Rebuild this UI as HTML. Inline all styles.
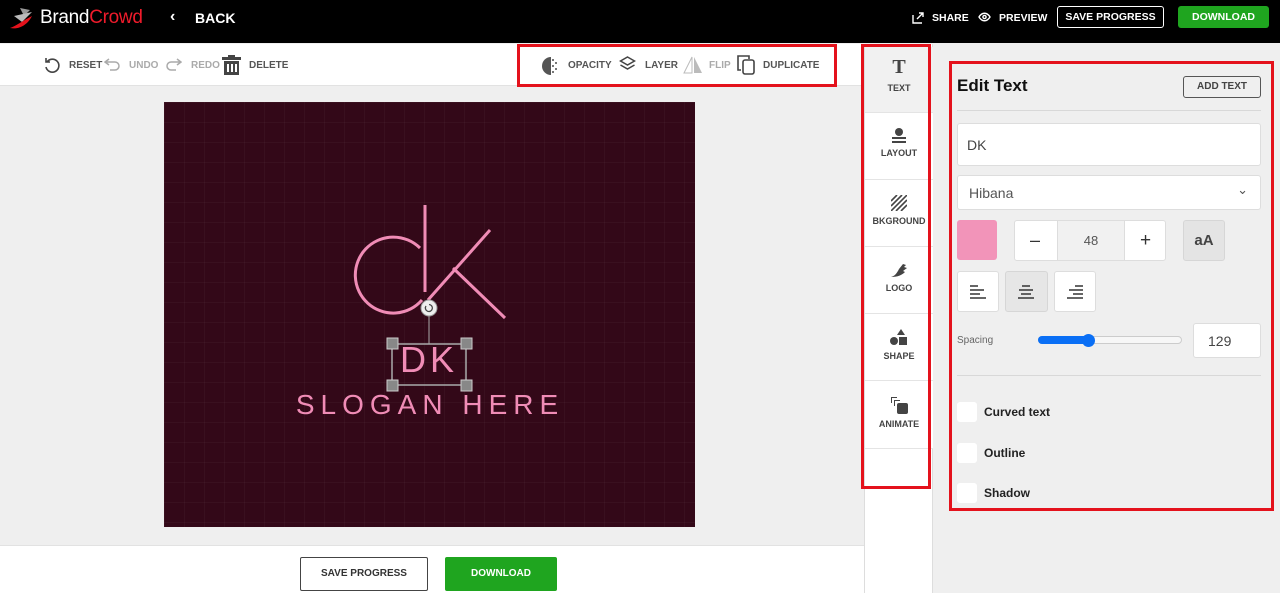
<!DOCTYPE html>
<html><head><meta charset="utf-8"><style>
*{box-sizing:border-box;margin:0;padding:0}
body{width:1280px;height:593px;overflow:hidden;font-family:"Liberation Sans",sans-serif;background:#efefef;position:relative}
.a{position:absolute}
.hd{left:0;top:0;width:1280px;height:43px;background:#000;color:#fff}
.b{font-weight:bold;font-size:11px}
.red{border:3px solid #e4121c}
.tb{color:#555;font-size:10px;font-weight:bold}
.nav{left:865px;width:68px;text-align:center;font-size:9px;font-weight:bold;color:#444;background:#fff;border-bottom:1px solid #e4e4e4}
.box{background:#fff;border:1px solid #ddd;border-radius:3px}
.cb{width:20px;height:20px;background:#fff;border-radius:3px}
.lbl{font-size:12px;font-weight:bold;color:#222}
</style></head><body>
<div class="a hd">
 <svg class="a" style="left:8px;top:6px" width="30" height="26" viewBox="0 0 30 26"><path d="M12 2l10 2-6 6z" fill="#999"/><path d="M6 10l18-4-10 10z" fill="#bbb"/><path d="M2 22c6-2 14-8 22-12-4 8-12 14-22 12z" fill="#e4121c"/></svg>
 <div class="a" style="left:40px;top:7px;font-size:19px;letter-spacing:-0.3px"><span style="color:#fff">Brand</span><span style="color:#ef1b2b">Crowd</span></div>
 <div class="a" style="left:170px;top:8px;font-size:16px;font-weight:bold">‹</div>
 <div class="a" style="left:195px;top:10px;font-size:14px;font-weight:bold">BACK</div>
 <svg class="a" style="left:912px;top:12px" width="12" height="12" viewBox="0 0 12 12" fill="none" stroke="#fff" stroke-width="1.4"><path d="M1 3v8h9M5 7l6-6M7 1h4v4"/></svg>
 <div class="a b" style="left:932px;top:12px;font-size:10.5px">SHARE</div>
 <svg class="a" style="left:978px;top:12px" width="13" height="10" viewBox="0 0 13 10" fill="none" stroke="#fff" stroke-width="1.4"><path d="M1 5c3-5 8-5 11 0-3 5-8 5-11 0z"/><circle cx="6.5" cy="5" r="1.6"/></svg>
 <div class="a b" style="left:999px;top:12px;font-size:10.5px">PREVIEW</div>
 <div class="a b" style="left:1057px;top:6px;width:107px;height:22px;border:1px solid #fff;border-radius:3px;text-align:center;line-height:20px;font-size:10.5px">SAVE PROGRESS</div>
 <div class="a b" style="left:1178px;top:6px;width:91px;height:22px;background:#1fa51f;border-radius:3px;text-align:center;line-height:22px;font-size:10.5px">DOWNLOAD</div>
</div>
<div class="a" style="left:0;top:44px;width:864px;height:42px;background:#fff;border-bottom:1px solid #e2e2e2"></div>
<svg class="a" style="left:44px;top:57px" width="17" height="17" viewBox="0 0 17 17" fill="none" stroke="#444" stroke-width="1.6"><path d="M3 5a6.5 6.5 0 1 1-1 5M2 1v4h4"/></svg>
<div class="a tb" style="left:69px;top:60px">RESET</div>
<svg class="a" style="left:104px;top:57px" width="18" height="15" viewBox="0 0 18 15" fill="none" stroke="#aaa" stroke-width="1.5"><path d="M5 2L1 5l4 3M1 5h10a4 4 0 0 1 0 8H6"/></svg>
<div class="a tb" style="left:129px;top:60px;color:#aaa">UNDO</div>
<svg class="a" style="left:164px;top:57px" width="18" height="15" viewBox="0 0 18 15" fill="none" stroke="#aaa" stroke-width="1.5"><path d="M13 2l4 3-4 3M17 5H7a4 4 0 0 0 0 8h5"/></svg>
<div class="a tb" style="left:191px;top:60px;color:#aaa">REDO</div>
<svg class="a" style="left:222px;top:55px" width="19" height="20" viewBox="0 0 19 20" fill="#444"><rect x="0" y="2" width="19" height="3"/><rect x="6" y="0" width="7" height="3"/><path d="M2 6h15v14H2zM5 9v8h2V9zm4 0v8h2V9zm4 0v8h2V9z" fill-rule="evenodd"/></svg>
<div class="a tb" style="left:249px;top:60px">DELETE</div>
<div class="a red" style="left:517px;top:44px;width:320px;height:43px"></div>
<svg class="a" style="left:542px;top:57px" width="18" height="18" viewBox="0 0 18 18"><path d="M9 0a9 9 0 0 0 0 18z" fill="#555"/><g fill="#777"><rect x="10" y="2" width="2" height="2"/><rect x="13" y="5" width="2" height="2"/><rect x="10" y="8" width="2" height="2"/><rect x="13" y="11" width="2" height="2"/><rect x="10" y="14" width="2" height="2"/></g></svg>
<div class="a tb" style="left:568px;top:60px">OPACITY</div>
<svg class="a" style="left:619px;top:56px" width="17" height="17" viewBox="0 0 17 17" fill="none" stroke="#444" stroke-width="1.5"><path d="M8.5 1l7 4-7 4-7-4zM1.5 9l7 4 7-4"/></svg>
<div class="a tb" style="left:645px;top:60px">LAYER</div>
<svg class="a" style="left:683px;top:56px" width="20" height="18" viewBox="0 0 20 18"><path d="M9 1v16H1z" fill="none" stroke="#bbb"/><path d="M11 1v16h8z" fill="#bbb"/></svg>
<div class="a tb" style="left:709px;top:60px;color:#aaa">FLIP</div>
<svg class="a" style="left:737px;top:55px" width="19" height="20" viewBox="0 0 19 20" fill="none" stroke="#444" stroke-width="1.6"><path d="M4 15H1V1h11v3"/><rect x="6" y="5" width="11" height="14" rx="2"/></svg>
<div class="a tb" style="left:763px;top:60px">DUPLICATE</div>
<div class="a" style="left:164px;top:102px;width:531px;height:425px;background:#330818;background-image:linear-gradient(rgba(255,255,255,.03) 1px,transparent 1px),linear-gradient(90deg,rgba(255,255,255,.03) 1px,transparent 1px);background-size:20px 20px"></div>
<svg class="a" style="left:300px;top:190px" width="230" height="150" viewBox="0 0 230 150" fill="none" stroke="#f08cb6" stroke-width="3"><path d="M120 58A38 38 0 1 0 122 110"/><path d="M125 15V102M190 40L128 110M153 78L205 128"/></svg>
<div class="a" style="left:389px;top:338px;width:80px;text-align:center;color:#f08cb6;font-size:36px;letter-spacing:4px;line-height:44px">DK</div>
<svg class="a" style="left:380px;top:295px" width="100" height="100" viewBox="0 0 100 100"><line x1="49" y1="18" x2="49" y2="49" stroke="#aaa"/><rect x="12" y="49" width="74" height="41" fill="none" stroke="#aaa" stroke-width="1.5"/><circle cx="49" cy="13" r="8" fill="#eee" stroke="#999"/><path d="M46 11a3.5 3.5 0 1 0 3-1.5" fill="none" stroke="#444" stroke-width="1.3"/><g fill="#888" stroke="#ccc"><rect x="7" y="43" width="11" height="11"/><rect x="81" y="43" width="11" height="11"/><rect x="7" y="85" width="11" height="11"/><rect x="81" y="85" width="11" height="11"/></g></svg>
<div class="a" style="left:290px;top:389px;width:280px;text-align:center;color:#f08cb6;font-size:28px;letter-spacing:6px;line-height:32px">SLOGAN HERE</div>
<div class="a" style="left:0;top:545px;width:864px;height:48px;background:#fff;border-top:1px solid #e2e2e2"></div>
<div class="a b" style="left:300px;top:557px;width:128px;height:34px;border:1px solid #444;border-radius:2px;text-align:center;line-height:32px;color:#333;font-size:10px">SAVE PROGRESS</div>
<div class="a b" style="left:445px;top:557px;width:112px;height:34px;background:#1fa51f;border-radius:2px;text-align:center;line-height:34px;color:#fff;font-size:10px">DOWNLOAD</div>
<div class="a" style="left:864px;top:44px;width:1px;height:549px;background:#ddd"></div>
<div class="a" style="left:865px;top:44px;width:68px;height:549px;background:#fff;border-right:1px solid #ddd"></div>
<div class="a nav" style="top:47px;height:66px;background:#f1f1f1"><div style="font-size:20px;font-family:'Liberation Serif',serif;color:#444;margin-top:9px;line-height:22px">T</div><div style="margin-top:5px">TEXT</div></div>
<div class="a nav" style="top:113px;height:67px"><svg style="margin-top:14px" width="16" height="16" viewBox="0 0 16 16" fill="#444"><circle cx="8" cy="5" r="4"/><rect x="1" y="10" width="14" height="2"/><rect x="1" y="14" width="14" height="2"/></svg><div style="margin-top:3px">LAYOUT</div></div>
<div class="a nav" style="top:180px;height:67px"><svg style="margin-top:15px" width="16" height="16" viewBox="0 0 16 16" stroke="#444" stroke-width="1.6"><path d="M0 6l6-6M0 11l11-11M0 16l16-16M5 16l11-11M10 16l6-6"/></svg><div style="margin-top:3px">BKGROUND</div></div>
<div class="a nav" style="top:247px;height:67px"><svg style="margin-top:15px" width="18" height="16" viewBox="0 0 18 16" fill="#444"><path d="M1 15c4-1 6-4 8-8l4-5 3 1-2 2 3 1-4 3 2 1c-3 3-7 5-14 5z"/></svg><div style="margin-top:3px">LOGO</div></div>
<div class="a nav" style="top:314px;height:67px"><svg style="margin-top:15px" width="18" height="17" viewBox="0 0 18 17" fill="#444"><path d="M11 0l4 6h-8z"/><circle cx="4" cy="12" r="4"/><rect x="9" y="8" width="8" height="8"/></svg><div style="margin-top:3px">SHAPE</div></div>
<div class="a nav" style="top:381px;height:68px"><svg style="margin-top:15px" width="18" height="18" viewBox="0 0 18 18" fill="#444"><path d="M1 1h6v1H2v5H1zM4 4h6v1H5v5H4z"/><rect x="7" y="7" width="11" height="11" rx="2"/></svg><div style="margin-top:3px">ANIMATE</div></div>
<div class="a red" style="left:861px;top:44px;width:70px;height:445px"></div>
<div class="a red" style="left:949px;top:61px;width:325px;height:450px"></div>
<div class="a" style="left:957px;top:76px;font-size:17px;font-weight:bold;color:#111">Edit Text</div>
<div class="a" style="left:1183px;top:76px;width:78px;height:22px;border:1px solid #555;border-radius:3px;font-size:10px;font-weight:bold;color:#444;text-align:center;line-height:20px">ADD TEXT</div>
<div class="a" style="left:957px;top:110px;width:304px;height:1px;background:#d8d8d8"></div>
<div class="a box" style="left:957px;top:123px;width:304px;height:43px;font-size:14px;color:#444;padding:13px 9px">DK</div>
<div class="a box" style="left:957px;top:175px;width:304px;height:35px;font-size:14px;color:#555;padding:9px 11px">Hibana<span style="position:absolute;right:12px;top:6px;font-size:13px">⌄</span></div>
<div class="a" style="left:957px;top:220px;width:40px;height:40px;background:#f294b9;border-radius:3px"></div>
<div class="a box" style="left:1014px;top:220px;width:152px;height:41px"></div>
<div class="a" style="left:1014px;top:220px;width:42px;height:41px;text-align:center;line-height:41px;font-size:18px;color:#333">–</div>
<div class="a" style="left:1057px;top:221px;width:68px;height:39px;background:#f1f1f1;border-left:1px solid #ddd;border-right:1px solid #ddd;text-align:center;line-height:39px;font-size:13px;color:#555">48</div>
<div class="a" style="left:1125px;top:220px;width:41px;height:41px;text-align:center;line-height:41px;font-size:19px;color:#333">+</div>
<div class="a" style="left:1183px;top:220px;width:42px;height:41px;background:#e4e4e4;border:1px solid #d6d6d6;border-radius:3px;text-align:center;line-height:40px;font-size:15px;font-weight:bold;color:#444">aA</div>
<div class="a box" style="left:957px;top:271px;width:42px;height:41px"><svg style="margin:13px 0 0 12px" width="16" height="14" stroke="#333" stroke-width="1.5"><path d="M0 1h8M0 5h14M0 9h10M0 13h16"/></svg></div>
<div class="a" style="left:1005px;top:271px;width:43px;height:41px;background:#e6e6e6;border:1px solid #d6d6d6;border-radius:3px"><svg style="margin:13px 0 0 12px" width="16" height="14" stroke="#333" stroke-width="1.5"><path d="M4 1h8M1 5h14M3 9h10M0 13h16"/></svg></div>
<div class="a box" style="left:1054px;top:271px;width:42px;height:41px"><svg style="margin:13px 0 0 12px" width="16" height="14" stroke="#333" stroke-width="1.5"><path d="M8 1h8M2 5h14M6 9h10M0 13h16"/></svg></div>
<div class="a" style="left:957px;top:335px;font-size:10px;color:#666">Spacing</div>
<div class="a" style="left:1038px;top:336px;width:144px;height:8px;border:1px solid #ccc;border-radius:4px;background:#f7f7f7"></div>
<div class="a" style="left:1038px;top:336px;width:50px;height:8px;border-radius:4px;background:#0a6ff5"></div>
<div class="a" style="left:1082px;top:334px;width:13px;height:13px;border-radius:50%;background:#0a6ff5"></div>
<div class="a box" style="left:1193px;top:323px;width:68px;height:35px;font-size:14px;color:#444;padding:9px 14px">129</div>
<div class="a" style="left:957px;top:375px;width:304px;height:1px;background:#d8d8d8"></div>
<div class="a cb" style="left:957px;top:402px"></div><div class="a lbl" style="left:984px;top:405px">Curved text</div>
<div class="a cb" style="left:957px;top:443px"></div><div class="a lbl" style="left:984px;top:446px">Outline</div>
<div class="a cb" style="left:957px;top:483px"></div><div class="a lbl" style="left:984px;top:486px">Shadow</div>
</body></html>
